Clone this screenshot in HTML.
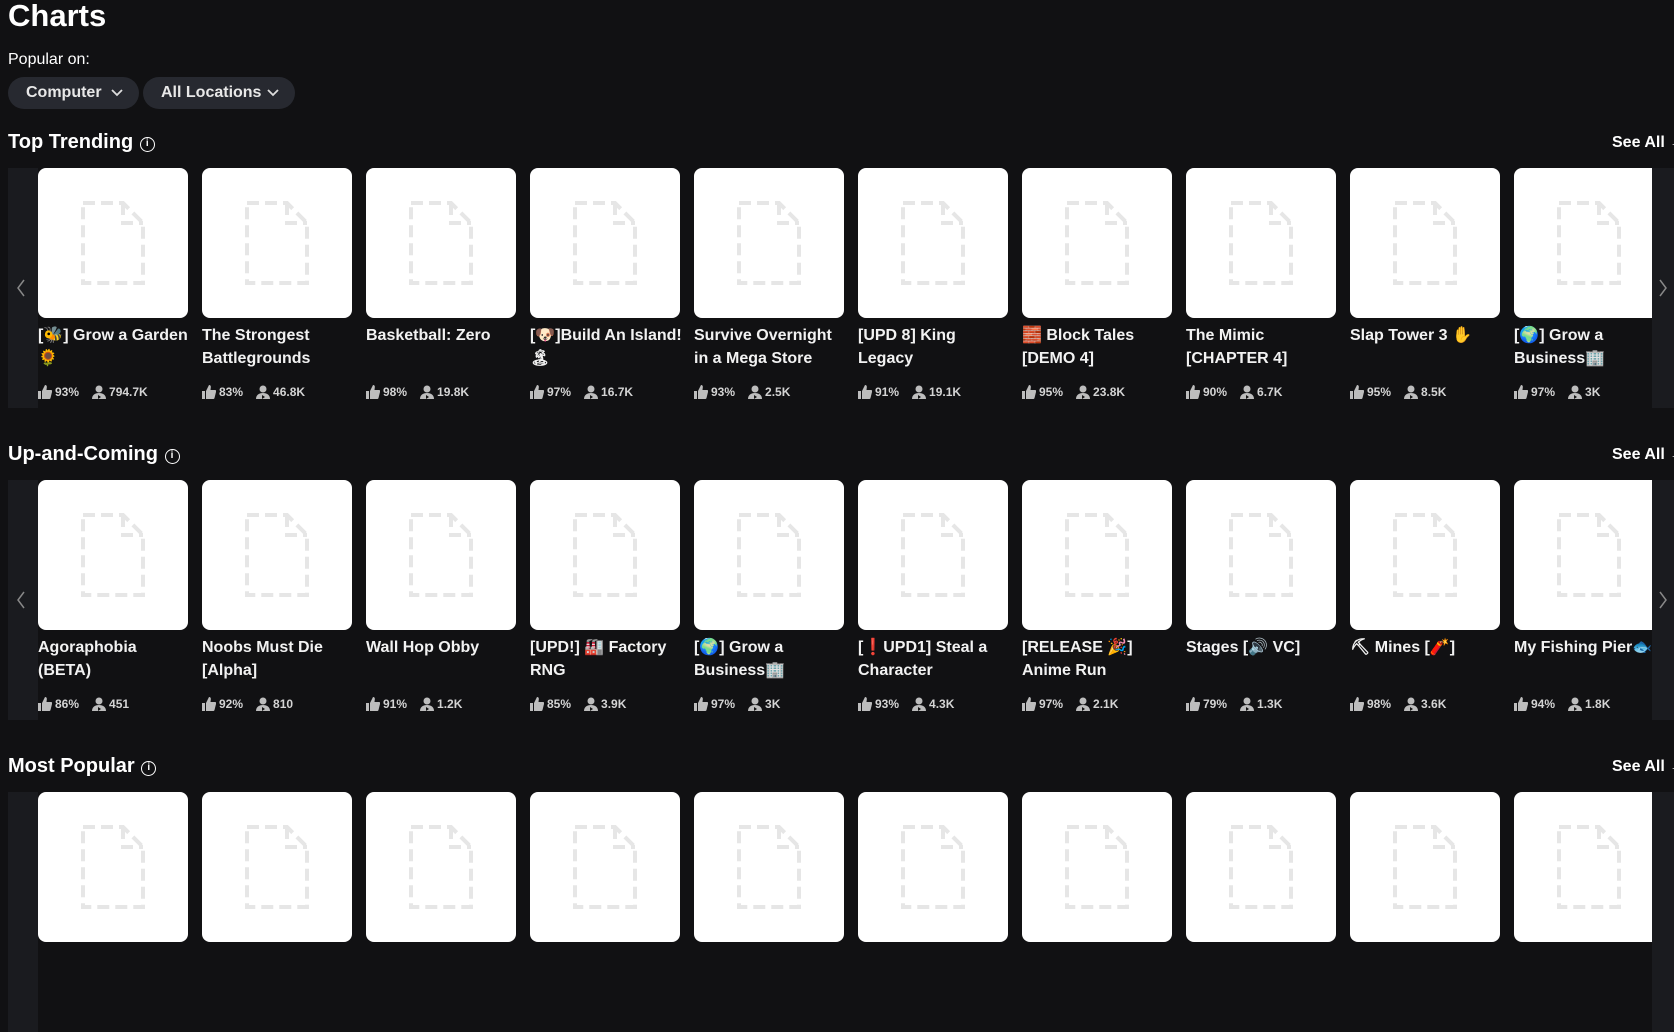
<!DOCTYPE html>
<html><head><meta charset="utf-8"><style>
*{margin:0;padding:0;box-sizing:border-box}
body{width:1674px;height:839px;overflow:hidden;background:#111113;color:#fff;font-family:"Liberation Sans","Noto Sans CJK JP",sans-serif;position:relative}
h1{position:absolute;left:8px;top:-2px;font-size:31px;font-weight:bold}
.pop{position:absolute;left:8px;top:51px;font-size:16px}
.pill{position:absolute;top:77px;height:32px;border-radius:16px;background:#272930;font-size:16px;font-weight:bold;line-height:32px;padding-left:18px;color:#e8e8e8}
.pill svg{position:absolute;right:16px;top:12px}
.sec{position:absolute;left:0;width:1674px;height:260px}
.h{position:absolute;left:8px;top:-11px;font-size:20px;font-weight:bold}
.h .i{display:inline-block;width:15px;height:15px;border:1.6px solid #fff;border-radius:50%;font-size:10px;text-align:center;line-height:12px;vertical-align:2px;margin-left:1px}
.see{position:absolute;left:1612px;top:-8px;font-size:16px;font-weight:bold;white-space:nowrap}
.ls{position:absolute;left:8px;top:26px;width:30px;height:240px;background:#1a1b1f}
.rs{position:absolute;left:1652px;top:26px;width:22px;height:240px;background:#1a1b1f}
.ls svg,.rs svg{position:absolute;top:110px}
.c{position:absolute;top:26px;width:150px}
.im{width:150px;height:150px;background:#fff;border-radius:8px;position:relative}
.im svg{position:absolute;left:43px;top:33px}
.t{font-size:16px;font-weight:bold;line-height:23px;margin-top:6px;height:46px;color:#f2f2f2;white-space:nowrap}
.s{font-size:12px;font-weight:bold;color:#d4d4d4;margin-top:15px;display:flex;align-items:center;gap:3px}
.s svg.p{margin-left:10px}
</style></head><body>
<h1>Charts</h1>
<div class="pop">Popular on:</div>
<div class="pill" style="left:8px;width:131px">Computer<svg width="12" height="8"><path d="M1 1l5 5 5-5" stroke="#ddd" stroke-width="1.8" fill="none"/></svg></div>
<div class="pill" style="left:143px;width:152px">All Locations<svg width="12" height="8"><path d="M1 1l5 5 5-5" stroke="#ddd" stroke-width="1.8" fill="none"/></svg></div>

<svg width="0" height="0" style="position:absolute"><defs>
<symbol id="doc" viewBox="0 0 64 84"><path d="M2 2H42L62 22V82H2Z M42 2V22H62" fill="none" stroke="#e6e6e6" stroke-width="4" stroke-dasharray="12 6"/></symbol>
<symbol id="th" viewBox="0 0 14 14"><path d="M0 6h3v8H0z M4 6l3-6c1.5 0 2 1 1.8 2.5L8.5 5H13c1 0 1.3 1 1 2l-1.5 6c-.2.7-.7 1-1.3 1H4z" fill="#bdbdbd"/></symbol>
<symbol id="pe" viewBox="0 0 14 14"><circle cx="7" cy="4" r="3.5" fill="#bdbdbd"/><path d="M0 14c0-4 3-6 7-6s7 2 7 6z" fill="#bdbdbd"/><path d="M6 10l3 2-3 2z" fill="#111"/></symbol>
<symbol id="cl" viewBox="0 0 10 20"><path d="M8 2L2 10l6 8" stroke="#888" stroke-width="1.5" fill="none"/></symbol>
<symbol id="cr" viewBox="0 0 10 20"><path d="M2 2l6 8-6 8" stroke="#888" stroke-width="1.5" fill="none"/></symbol>
</defs></svg>

<div class="sec" style="top:142px">
<div class="h">Top Trending <span class="i">i</span></div><div class="see">See All →</div>
<div class="ls"><svg width="10" height="20" style="left:8px"><use href="#cl"/></svg></div><div class="rs"><svg width="10" height="20" style="left:6px"><use href="#cr"/></svg></div>
<div class="c" style="left:38px"><div class="im"><svg width="64" height="84"><use href="#doc"/></svg></div><div class="t">[🐝] Grow a Garden<br>🌻</div><div class="s"><svg width="14" height="14"><use href="#th"/></svg>93%<svg class="p" width="14" height="14"><use href="#pe"/></svg>794.7K</div></div>
<div class="c" style="left:202px"><div class="im"><svg width="64" height="84"><use href="#doc"/></svg></div><div class="t">The Strongest<br>Battlegrounds</div><div class="s"><svg width="14" height="14"><use href="#th"/></svg>83%<svg class="p" width="14" height="14"><use href="#pe"/></svg>46.8K</div></div>
<div class="c" style="left:366px"><div class="im"><svg width="64" height="84"><use href="#doc"/></svg></div><div class="t">Basketball: Zero<br>&nbsp;</div><div class="s"><svg width="14" height="14"><use href="#th"/></svg>98%<svg class="p" width="14" height="14"><use href="#pe"/></svg>19.8K</div></div>
<div class="c" style="left:530px"><div class="im"><svg width="64" height="84"><use href="#doc"/></svg></div><div class="t">[🐶]Build An Island!<br>🏝</div><div class="s"><svg width="14" height="14"><use href="#th"/></svg>97%<svg class="p" width="14" height="14"><use href="#pe"/></svg>16.7K</div></div>
<div class="c" style="left:694px"><div class="im"><svg width="64" height="84"><use href="#doc"/></svg></div><div class="t">Survive Overnight<br>in a Mega Store</div><div class="s"><svg width="14" height="14"><use href="#th"/></svg>93%<svg class="p" width="14" height="14"><use href="#pe"/></svg>2.5K</div></div>
<div class="c" style="left:858px"><div class="im"><svg width="64" height="84"><use href="#doc"/></svg></div><div class="t">[UPD 8] King<br>Legacy</div><div class="s"><svg width="14" height="14"><use href="#th"/></svg>91%<svg class="p" width="14" height="14"><use href="#pe"/></svg>19.1K</div></div>
<div class="c" style="left:1022px"><div class="im"><svg width="64" height="84"><use href="#doc"/></svg></div><div class="t">🧱 Block Tales<br>[DEMO 4]</div><div class="s"><svg width="14" height="14"><use href="#th"/></svg>95%<svg class="p" width="14" height="14"><use href="#pe"/></svg>23.8K</div></div>
<div class="c" style="left:1186px"><div class="im"><svg width="64" height="84"><use href="#doc"/></svg></div><div class="t">The Mimic<br>[CHAPTER 4]</div><div class="s"><svg width="14" height="14"><use href="#th"/></svg>90%<svg class="p" width="14" height="14"><use href="#pe"/></svg>6.7K</div></div>
<div class="c" style="left:1350px"><div class="im"><svg width="64" height="84"><use href="#doc"/></svg></div><div class="t">Slap Tower 3 ✋<br>&nbsp;</div><div class="s"><svg width="14" height="14"><use href="#th"/></svg>95%<svg class="p" width="14" height="14"><use href="#pe"/></svg>8.5K</div></div>
<div class="c" style="left:1514px;width:138px;overflow:hidden"><div class="im"><svg width="64" height="84"><use href="#doc"/></svg></div><div class="t">[🌍] Grow a<br>Business🏢</div><div class="s"><svg width="14" height="14"><use href="#th"/></svg>97%<svg class="p" width="14" height="14"><use href="#pe"/></svg>3K</div></div>
</div>

<div class="sec" style="top:454px">
<div class="h">Up-and-Coming <span class="i">i</span></div><div class="see">See All →</div>
<div class="ls"><svg width="10" height="20" style="left:8px"><use href="#cl"/></svg></div><div class="rs"><svg width="10" height="20" style="left:6px"><use href="#cr"/></svg></div>
<div class="c" style="left:38px"><div class="im"><svg width="64" height="84"><use href="#doc"/></svg></div><div class="t">Agoraphobia<br>(BETA)</div><div class="s"><svg width="14" height="14"><use href="#th"/></svg>86%<svg class="p" width="14" height="14"><use href="#pe"/></svg>451</div></div>
<div class="c" style="left:202px"><div class="im"><svg width="64" height="84"><use href="#doc"/></svg></div><div class="t">Noobs Must Die<br>[Alpha]</div><div class="s"><svg width="14" height="14"><use href="#th"/></svg>92%<svg class="p" width="14" height="14"><use href="#pe"/></svg>810</div></div>
<div class="c" style="left:366px"><div class="im"><svg width="64" height="84"><use href="#doc"/></svg></div><div class="t">Wall Hop Obby<br>&nbsp;</div><div class="s"><svg width="14" height="14"><use href="#th"/></svg>91%<svg class="p" width="14" height="14"><use href="#pe"/></svg>1.2K</div></div>
<div class="c" style="left:530px"><div class="im"><svg width="64" height="84"><use href="#doc"/></svg></div><div class="t">[UPD!] 🏭 Factory<br>RNG</div><div class="s"><svg width="14" height="14"><use href="#th"/></svg>85%<svg class="p" width="14" height="14"><use href="#pe"/></svg>3.9K</div></div>
<div class="c" style="left:694px"><div class="im"><svg width="64" height="84"><use href="#doc"/></svg></div><div class="t">[🌍] Grow a<br>Business🏢</div><div class="s"><svg width="14" height="14"><use href="#th"/></svg>97%<svg class="p" width="14" height="14"><use href="#pe"/></svg>3K</div></div>
<div class="c" style="left:858px"><div class="im"><svg width="64" height="84"><use href="#doc"/></svg></div><div class="t">[❗UPD1] Steal a<br>Character</div><div class="s"><svg width="14" height="14"><use href="#th"/></svg>93%<svg class="p" width="14" height="14"><use href="#pe"/></svg>4.3K</div></div>
<div class="c" style="left:1022px"><div class="im"><svg width="64" height="84"><use href="#doc"/></svg></div><div class="t">[RELEASE 🎉]<br>Anime Run</div><div class="s"><svg width="14" height="14"><use href="#th"/></svg>97%<svg class="p" width="14" height="14"><use href="#pe"/></svg>2.1K</div></div>
<div class="c" style="left:1186px"><div class="im"><svg width="64" height="84"><use href="#doc"/></svg></div><div class="t">Stages [🔊 VC]<br>&nbsp;</div><div class="s"><svg width="14" height="14"><use href="#th"/></svg>79%<svg class="p" width="14" height="14"><use href="#pe"/></svg>1.3K</div></div>
<div class="c" style="left:1350px"><div class="im"><svg width="64" height="84"><use href="#doc"/></svg></div><div class="t">⛏ Mines [🧨]<br>&nbsp;</div><div class="s"><svg width="14" height="14"><use href="#th"/></svg>98%<svg class="p" width="14" height="14"><use href="#pe"/></svg>3.6K</div></div>
<div class="c" style="left:1514px;width:138px;overflow:hidden"><div class="im"><svg width="64" height="84"><use href="#doc"/></svg></div><div class="t">My Fishing Pier🐟<br>&nbsp;</div><div class="s"><svg width="14" height="14"><use href="#th"/></svg>94%<svg class="p" width="14" height="14"><use href="#pe"/></svg>1.8K</div></div>
</div>

<div class="sec" style="top:766px">
<div class="h">Most Popular <span class="i">i</span></div><div class="see">See All →</div>
<div class="ls"></div><div class="rs"></div>
<div class="c" style="left:38px"><div class="im"><svg width="64" height="84"><use href="#doc"/></svg></div></div>
<div class="c" style="left:202px"><div class="im"><svg width="64" height="84"><use href="#doc"/></svg></div></div>
<div class="c" style="left:366px"><div class="im"><svg width="64" height="84"><use href="#doc"/></svg></div></div>
<div class="c" style="left:530px"><div class="im"><svg width="64" height="84"><use href="#doc"/></svg></div></div>
<div class="c" style="left:694px"><div class="im"><svg width="64" height="84"><use href="#doc"/></svg></div></div>
<div class="c" style="left:858px"><div class="im"><svg width="64" height="84"><use href="#doc"/></svg></div></div>
<div class="c" style="left:1022px"><div class="im"><svg width="64" height="84"><use href="#doc"/></svg></div></div>
<div class="c" style="left:1186px"><div class="im"><svg width="64" height="84"><use href="#doc"/></svg></div></div>
<div class="c" style="left:1350px"><div class="im"><svg width="64" height="84"><use href="#doc"/></svg></div></div>
<div class="c" style="left:1514px;width:138px;overflow:hidden"><div class="im"><svg width="64" height="84"><use href="#doc"/></svg></div></div>
</div>
</body></html>
